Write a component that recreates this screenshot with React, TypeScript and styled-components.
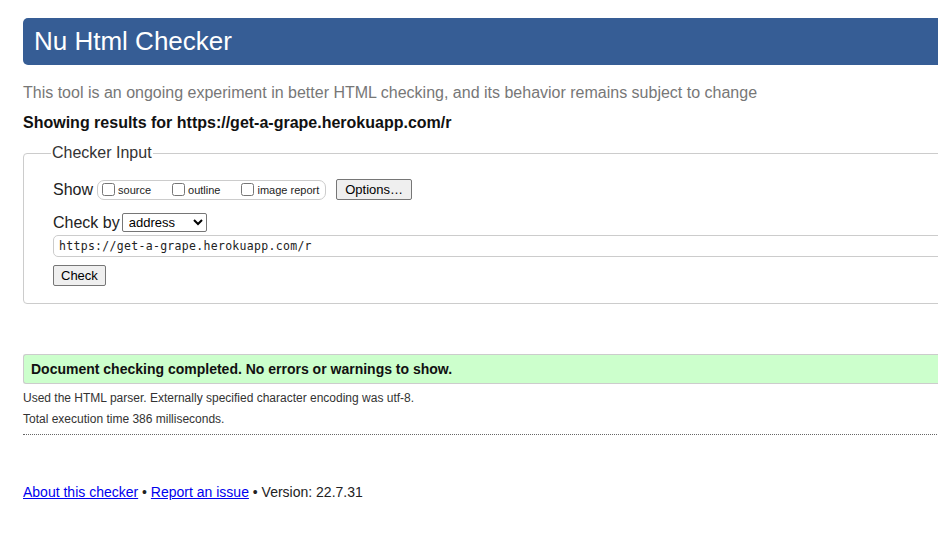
import styled, { createGlobalStyle } from "styled-components";

const GlobalStyle = createGlobalStyle`
  html, body {
    margin: 0;
    padding: 0;
    background: #fff;
    overflow: hidden;
  }
  body {
    font-family: "Liberation Sans", Arial, sans-serif;
    color: #222;
  }
`;

const Page = styled.div`
  width: 1040px;
  padding: 18px 0 0 23px;
`;

const Banner = styled.h1`
  margin: 0;
  height: 47px;
  display: flex;
  align-items: center;
  padding-left: 11px;
  background: #365d95;
  color: #fff;
  font-size: 26px;
  font-weight: normal;
  border-radius: 5px;
`;

const Tagline = styled.p`
  margin: 18px 0 0;
  font-size: 16px;
  color: #777;
  line-height: 20px;
`;

const ResultsFor = styled.p`
  margin: 10px 0 0;
  font-size: 16px;
  font-weight: bold;
  color: #111;
  line-height: 20px;
`;

const InputFieldset = styled.fieldset`
  margin: 11px 0 0;
  padding: 12px 29px 17px;
  border: 1px solid #ccc;
  border-radius: 4px;
`;

const Legend = styled.legend`
  padding: 0 1px;
  margin-left: -2px;
  font-size: 16px;
  color: #333;
`;

const Row = styled.div<{ $top: number; $gap?: number }>`
  display: flex;
  align-items: center;
  gap: ${({ $gap }) => $gap ?? 4}px;
  margin-top: ${({ $top }) => $top}px;
`;

const RowLabel = styled.span`
  font-size: 16px;
  color: #222;
`;

const OptionGroup = styled.div`
  display: flex;
  align-items: center;
  gap: 21px;
  height: 18px;
  padding: 0 6px 0 4px;
  border: 1px solid #ccc;
  border-radius: 7px;
  margin-right: 6px;
`;

const OptionLabel = styled.label`
  display: flex;
  align-items: center;
  font-size: 11px;
  color: #222;
`;

const Box = styled.input`
  width: 13px;
  height: 13px;
  margin: 0 3px 0 0;
`;

const Button = styled.button<{ $top?: number; $pad?: number }>`
  font-family: "Liberation Sans", Arial, sans-serif;
  font-size: 13px;
  color: #000;
  background: #efefef;
  border: 1px solid #767676;
  border-radius: 2px;
  padding: 1px ${({ $pad }) => $pad ?? 7}px;
  height: 21px;
  margin-top: ${({ $top }) => $top ?? 0}px;
`;

const Select = styled.select`
  font-family: "Liberation Sans", Arial, sans-serif;
  font-size: 13px;
  width: 85px;
  height: 19px;
  padding: 0 2px;
  border: 1px solid #767676;
  border-radius: 2px;
  background: #fff;
  color: #000;
`;

const UrlInput = styled.input`
  display: block;
  box-sizing: border-box;
  width: 100%;
  height: 22px;
  margin-top: 3px;
  padding: 0 5px;
  font-family: "DejaVu Sans Mono", "Liberation Mono", monospace;
  font-size: 11.5px;
  letter-spacing: 0.3px;
  color: #222;
  border: 1px solid #ccc;
  border-radius: 5px;
`;

const Success = styled.div`
  margin-top: 50px;
  height: 28px;
  display: flex;
  align-items: center;
  padding-left: 7px;
  background: #ccffcc;
  border: 1px solid #ccc;
  border-right: none;
  border-radius: 3px 0 0 3px;
  font-size: 14px;
  font-weight: bold;
  color: #111;
`;

const DetailList = styled.div`
  margin-top: 4px;
`;

const Detail = styled.p`
  margin: 0;
  font-size: 12px;
  line-height: 21px;
  color: #333;
`;

const Divider = styled.hr`
  margin: 4px 0 0;
  border: none;
  border-top: 1px dotted #666;
`;

const Footer = styled.p`
  margin: 49px 0 0;
  font-size: 14px;
  color: #222;
`;

const Link = styled.a`
  color: #00e;
  text-decoration: underline;
`;

export default function App() {
  return (
    <>
      <GlobalStyle />
      <Page>
        <Banner>Nu Html Checker</Banner>
        <Tagline>
          This tool is an ongoing experiment in better HTML checking, and its
          behavior remains subject to change
        </Tagline>
        <ResultsFor>Showing results for https://get-a-grape.herokuapp.com/r</ResultsFor>

        <InputFieldset>
          <Legend>Checker Input</Legend>
          <Row $top={5}>
            <RowLabel>Show</RowLabel>
            <OptionGroup>
              <OptionLabel>
                <Box type="checkbox" />
                source
              </OptionLabel>
              <OptionLabel>
                <Box type="checkbox" />
                outline
              </OptionLabel>
              <OptionLabel>
                <Box type="checkbox" />
                image report
              </OptionLabel>
            </OptionGroup>
            <Button type="button" $pad={8}>Options…</Button>
          </Row>
          <Row $top={13} $gap={2}>
            <RowLabel>Check by</RowLabel>
            <Select defaultValue="address">
              <option value="address">address</option>
              <option value="file">file upload</option>
              <option value="text">text input</option>
            </Select>
          </Row>
          <UrlInput readOnly value="https://get-a-grape.herokuapp.com/r" />
          <Button type="button" $top={8}>
            Check
          </Button>
        </InputFieldset>

        <Success>Document checking completed. No errors or warnings to show.</Success>
        <DetailList>
          <Detail>
            Used the HTML parser. Externally specified character encoding was utf-8.
          </Detail>
          <Detail>Total execution time 386 milliseconds.</Detail>
        </DetailList>
        <Divider />

        <Footer>
          <Link href="#">About this checker</Link> •{" "}
          <Link href="#">Report an issue</Link> • Version: 22.7.31
        </Footer>
      </Page>
    </>
  );
}
